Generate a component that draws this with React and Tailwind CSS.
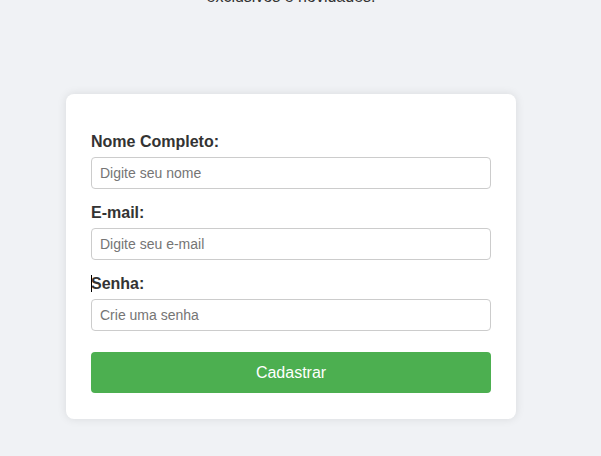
import React from "react";

function Field({ label, type, placeholder, caret }) {
  return (
    <div className="flex flex-col">
      <label className="relative block text-[16px] font-bold leading-[18px] text-[#333] mb-[6px]">
        {caret && (
          <span className="absolute left-0 top-0 h-[17px] w-px bg-black" />
        )}
        {label}
      </label>
      <input
        type={type}
        placeholder={placeholder}
        className="h-[32px] w-full rounded-[4px] border border-[#ccc] bg-white px-[8px] text-[14px] text-[#333] placeholder:text-[#757575] outline-none"
      />
    </div>
  );
}

export default function App() {
  return (
    <div
      className="min-h-[456px] w-full overflow-hidden bg-[#f0f2f5]"
      style={{ fontFamily: '"Liberation Sans", Arial, sans-serif' }}
    >
      <div className="flex w-[582px] flex-col items-center">
        <p className="-mt-[12px] text-[16px] leading-[18px] text-[#333]">
          exclusivos e novidades.
        </p>
        <form
          className="mt-[88px] flex w-[450px] flex-col gap-[15px] rounded-[8px] bg-white px-[25px] pt-[39px] pb-[26px] shadow-[0_0_10px_rgba(0,0,0,0.1)]"
          onSubmit={(e) => e.preventDefault()}
        >
          <Field label="Nome Completo:" type="text" placeholder="Digite seu nome" />
          <Field label="E-mail:" type="email" placeholder="Digite seu e-mail" />
          <Field label="Senha:" type="password" placeholder="Crie uma senha" caret />
          <button
            type="submit"
            className="mt-[6px] h-[41px] w-full rounded-[4px] bg-[#4caf50] text-[16px] text-white"
          >
            Cadastrar
          </button>
        </form>
      </div>
    </div>
  );
}
